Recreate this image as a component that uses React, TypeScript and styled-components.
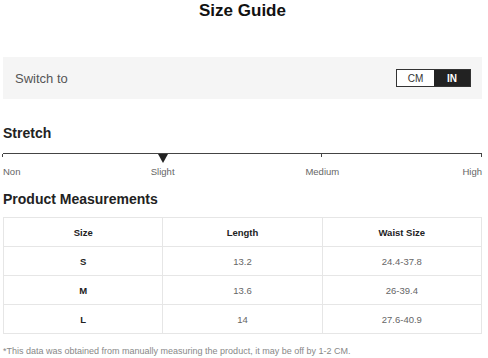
import styled, { createGlobalStyle } from "styled-components";

const GlobalStyle = createGlobalStyle`
  body {
    margin: 0;
    background: #fff;
    font-family: "Liberation Sans", Arial, sans-serif;
    color: #222;
  }
`;

const rows = [
  { size: "S", length: "13.2", waist: "24.4-37.8" },
  { size: "M", length: "13.6", waist: "26-39.4" },
  { size: "L", length: "14", waist: "27.6-40.9" },
];

const App = () => (
  <Page>
    <GlobalStyle />
    <Title>Size Guide</Title>
    <SwitchBar>
      <span>Switch to</span>
      <Toggle>
        <ToggleOption>CM</ToggleOption>
        <ToggleOption $active>IN</ToggleOption>
      </Toggle>
    </SwitchBar>
    <Heading>Stretch</Heading>
    <Track>
      <Tick style={{ left: "0%" }} />
      <Pointer style={{ left: "33.33%" }} />
      <Tick style={{ left: "66.67%" }} />
      <Tick style={{ left: "100%" }} />
    </Track>
    <ScaleLabels>
      <ScaleLabel $align="left">Non</ScaleLabel>
      <ScaleLabel $align="center" $span>
        Slight
      </ScaleLabel>
      <ScaleLabel $align="center" $span>
        Medium
      </ScaleLabel>
      <ScaleLabel $align="right">High</ScaleLabel>
    </ScaleLabels>
    <Heading $tight>Product Measurements</Heading>
    <Table>
      <thead>
        <tr>
          <HeadCell>Size</HeadCell>
          <HeadCell>Length</HeadCell>
          <HeadCell>Waist Size</HeadCell>
        </tr>
      </thead>
      <tbody>
        {rows.map((r) => (
          <tr key={r.size}>
            <Cell $bold>{r.size}</Cell>
            <Cell>{r.length}</Cell>
            <Cell>{r.waist}</Cell>
          </tr>
        ))}
      </tbody>
    </Table>
    <Note>
      *This data was obtained from manually measuring the product, it may be
      off by 1-2 CM.
    </Note>
  </Page>
);

export default App;

const Page = styled.div`
  width: 479px;
  padding: 0 6px 0 3px;
`;

const Title = styled.h1`
  margin: 0;
  padding-top: 1px;
  font-size: 17px;
  line-height: 20px;
  font-weight: 700;
  text-align: center;
  color: #111;
`;

const SwitchBar = styled.div`
  margin-top: 36px;
  height: 42px;
  display: flex;
  align-items: center;
  justify-content: space-between;
  padding: 0 11px 0 12px;
  background: #f5f5f5;
  font-size: 13px;
  color: #555;
`;

const Toggle = styled.div`
  display: flex;
  border: 1px solid #333;
  height: 16px;
`;

const ToggleOption = styled.div<{ $active?: boolean }>`
  width: ${(p) => (p.$active ? "36px" : "37px")};
  display: flex;
  align-items: center;
  justify-content: center;
  font-size: 10px;
  font-weight: ${(p) => (p.$active ? 700 : 400)};
  background: ${(p) => (p.$active ? "#222" : "#fff")};
  color: ${(p) => (p.$active ? "#fff" : "#333")};
`;

const Heading = styled.h2<{ $tight?: boolean }>`
  margin: ${(p) => (p.$tight ? "12px 0 0" : "25px 0 0")};
  font-size: 14px;
  line-height: 18px;
  font-weight: 700;
  color: #222;
`;

const Track = styled.div`
  position: relative;
  margin-top: 11px;
  height: 0;
  border-top: 1px solid #444;
`;

const Tick = styled.div`
  position: absolute;
  top: 0;
  width: 1px;
  height: 3px;
  margin-left: -1px;
  background: #444;
`;

const Pointer = styled.div`
  position: absolute;
  top: 0;
  margin-left: -5px;
  width: 0;
  height: 0;
  border-left: 5px solid transparent;
  border-right: 5px solid transparent;
  border-top: 9px solid #222;
`;

const ScaleLabels = styled.div`
  display: grid;
  grid-template-columns: repeat(6, 1fr);
  margin-top: 12px;
  font-size: 9.5px;
  line-height: 12px;
  color: #666;
`;

const ScaleLabel = styled.span<{ $align: string; $span?: boolean }>`
  text-align: ${(p) => p.$align};
  grid-column: ${(p) => (p.$span ? "span 2" : "span 1")};
`;

const Table = styled.table`
  width: 100%;
  margin-top: 9px;
  border-collapse: collapse;
  table-layout: fixed;
  font-size: 9.5px;
`;

const HeadCell = styled.th`
  height: 28px;
  padding: 0;
  border: 1px solid #e6e6e6;
  font-weight: 700;
  color: #222;
  text-align: center;
`;

const Cell = styled.td<{ $bold?: boolean }>`
  height: 28px;
  padding: 0;
  border: 1px solid #e6e6e6;
  text-align: center;
  font-weight: ${(p) => (p.$bold ? 700 : 400)};
  color: ${(p) => (p.$bold ? "#222" : "#666")};
`;

const Note = styled.p`
  margin: 11px 0 0;
  font-size: 9px;
  line-height: 12px;
  color: #888;
`;
